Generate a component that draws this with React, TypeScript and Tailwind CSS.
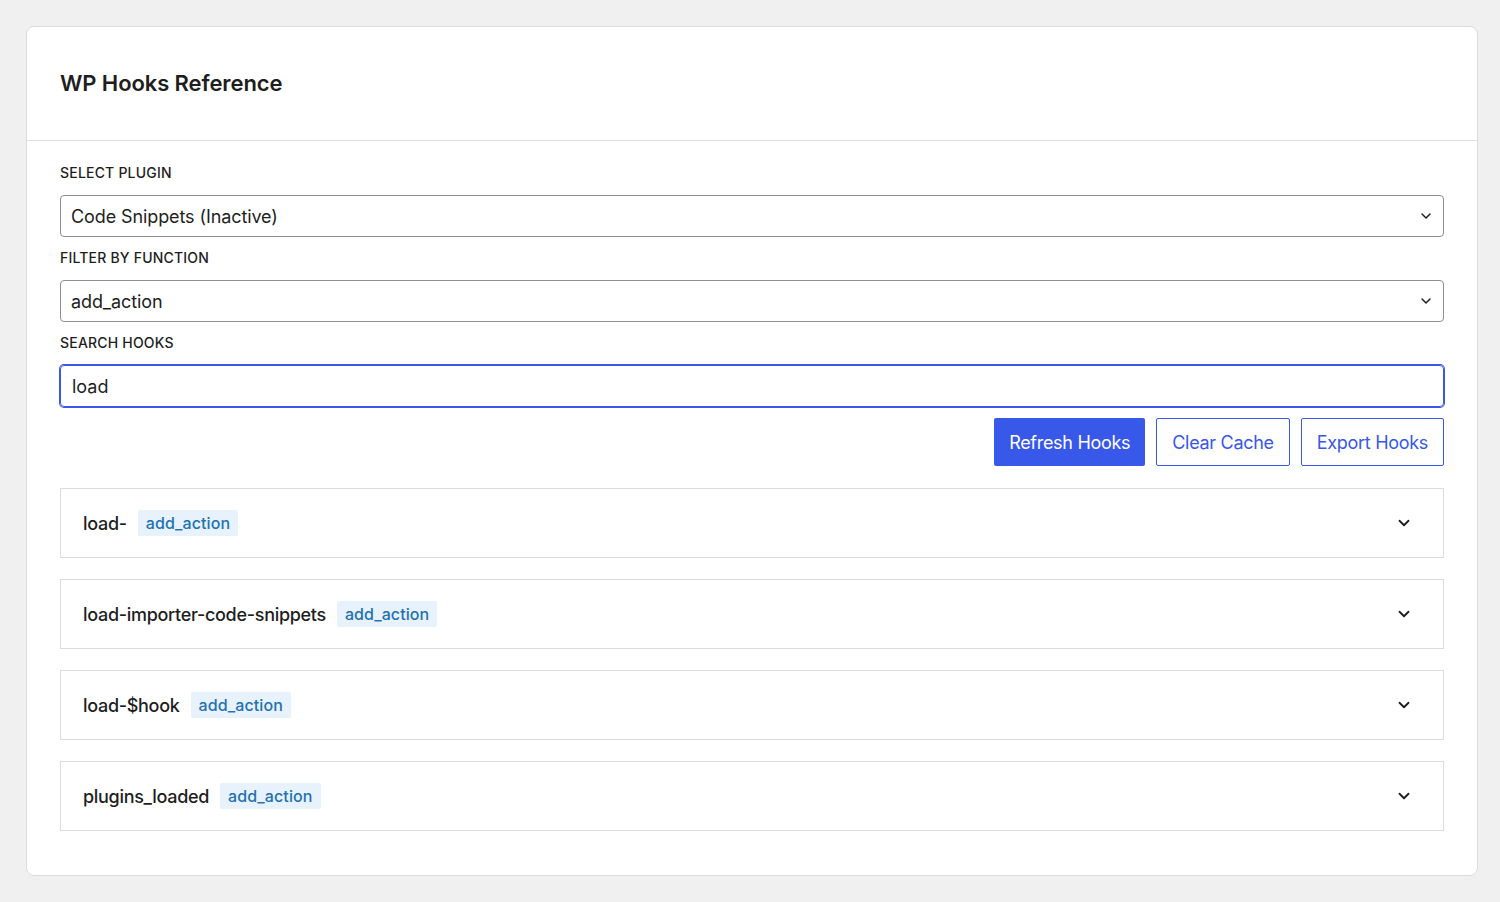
import { ChevronDown } from "lucide-react";

const hooks = [
  { name: "load-", fn: "add_action" },
  { name: "load-importer-code-snippets", fn: "add_action" },
  { name: "load-$hook", fn: "add_action" },
  { name: "plugins_loaded", fn: "add_action" },
];

function Label({ children }: { children: string }) {
  return (
    <div className="text-[14px] leading-[20px] font-medium uppercase tracking-[0.2px] text-[#1e1e1e] mb-[12px]">
      {children}
    </div>
  );
}

function SelectBox({ value }: { value: string }) {
  return (
    <div className="flex items-center justify-between h-[42px] border border-[#8c8f94] rounded-[4px] pl-[10px] pr-[9px] text-[18px] tracking-[-0.1px] text-[#1e1e1e] bg-white">
      <span>{value}</span>
      <ChevronDown size={16} strokeWidth={2.2} className="text-[#1e1e1e]" />
    </div>
  );
}

export default function App() {
  return (
    <div className="min-h-screen bg-[#f0f0f1] pt-[26px] pl-[26px] pr-[22px] pb-[26px] font-['Inter',sans-serif]">
      <div className="bg-white border border-[#dcdcde] rounded-[8px]">
        <div className="h-[114px] flex items-center px-[33px] border-b border-[#e0e0e0]">
          <h1 className="text-[22px] font-semibold text-[#1e1e1e] tracking-[-0.1px]">WP Hooks Reference</h1>
        </div>

        <div className="pl-[33px] pr-[33px] pt-[22px] pb-[44px]">
          <Label>Select Plugin</Label>
          <SelectBox value="Code Snippets (Inactive)" />

          <div className="mt-[11px]">
            <Label>Filter by Function</Label>
            <SelectBox value="add_action" />
          </div>

          <div className="mt-[11px]">
            <Label>Search Hooks</Label>
            <div className="h-[42px] flex items-center border border-[#3858e9] ring-1 ring-[#3858e9] rounded-[4px] pl-[11px] text-[18px] text-[#1e1e1e]">
              load
            </div>
          </div>

          <div className="flex justify-end gap-[11px] mt-[11px]">
            <button className="h-[48px] px-[15px] rounded-[2px] bg-[#3858e9] text-white text-[18px] tracking-[-0.3px]">Refresh Hooks</button>
            <button className="h-[48px] px-[15px] rounded-[2px] border border-[#3858e9] text-[#3858e9] text-[18px] tracking-[-0.3px] bg-white">Clear Cache</button>
            <button className="h-[48px] px-[15px] rounded-[2px] border border-[#3858e9] text-[#3858e9] text-[18px] tracking-[-0.3px] bg-white">Export Hooks</button>
          </div>

          <div className="flex flex-col gap-[21px] mt-[22px]">
            {hooks.map((h) => (
              <div
                key={h.name}
                className="h-[70px] flex items-center justify-between border border-[#dcdcde] pl-[22px] pr-[30px]"
              >
                <div className="flex items-center gap-[11px]">
                  <span className="text-[18px] font-medium text-[#1e1e1e] tracking-[-0.3px]">{h.name}</span>
                  <span className="bg-[#e7f2fc] text-[#2271b1] text-[16px] font-medium px-[8px] leading-[26px] rounded-[2px] tracking-[0.1px]">
                    {h.fn}
                  </span>
                </div>
                <ChevronDown size={18} strokeWidth={2.4} className="text-[#1e1e1e]" />
              </div>
            ))}
          </div>
        </div>
      </div>
    </div>
  );
}
